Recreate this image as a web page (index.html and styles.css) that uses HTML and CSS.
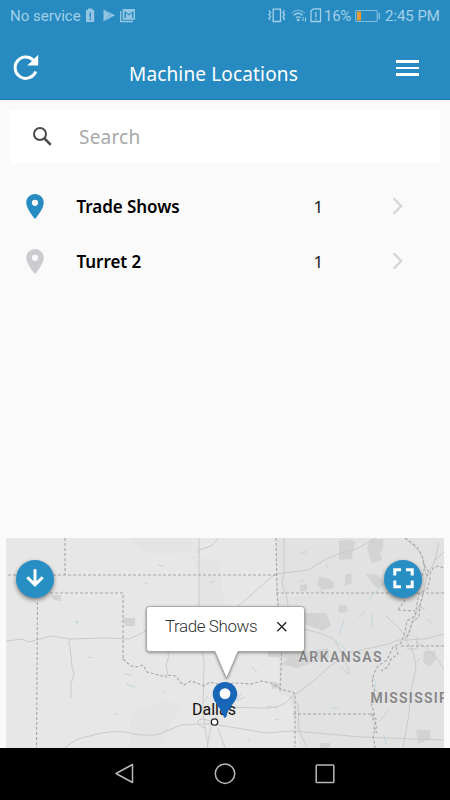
FILE: index.html
```html
<!DOCTYPE html>
<html lang="en">
<head>
<meta charset="utf-8">
<title>Machine Locations</title>
<link rel="stylesheet" href="styles.css">
</head>
<body>
<div class="screen">
  <header class="header">
    <div class="status">
      <span class="carrier">No service</span>
      <svg class="status-left" width="52" height="16" viewBox="85 8 52 16" fill="#94c6e3">
        <path fill-rule="evenodd" d="M88 8.500h4.500V10h1.700v12H86V10h2zM89.500 12.500v5h1.500v-5zM89.500 18.500V20h1.500v-1.500z"/>
        <path d="M103.500 9.500l11.500 5.700-11.500 6.300z"/><path d="M104 9.500l8 8M104 21l8-8" fill="none" stroke="#5ba5cf" stroke-width=".7"/>
        <path fill-rule="evenodd" d="M122.700 9h12.300v10.800h-12.300zM124.500 11v7h1.500v-5l3 2.500 3-2.500v5h1.500v-7l-4.500 3z"/>
        <path d="M120.700 11v10.500H133" fill="none" stroke="#94c6e3" stroke-width="1.300"/>
      </svg>
      <svg class="status-right" width="55" height="16" viewBox="267 8 55 16" fill="none" stroke="#a4d0e8" stroke-width="1.300">
        <path d="M273.200 9.200h7.300v12.300h-7.300zM269 10.500l1.500 2-1.500 2 1.500 2-1.500 2 1 1.500M284.500 10.500l-1.500 2 1.500 2-1.500 2 1.500 2-1 1.500"/>
        <path d="M291.500 13q6.500-5.500 13.500 0" stroke="#6cb0d7"/><path d="M293.700 15.300q4.500-4 9 0M295.800 17.800q2.500-2 4.800 0"/><circle cx="298.200" cy="20" r=".7"/><path d="M303 17v4M305.500 17.500v4" stroke-width="1"/>
        <path d="M311 11l2.500-2.200h7v12.700H311zM315.800 12v5M315.800 18.300v1.500"/>
      </svg>
      <span class="percent">16%</span>
      <svg class="battery" width="26" height="14" viewBox="355 8 26 14">
        <rect x="355.700" y="9.500" width="21.500" height="11" rx="1" fill="none" stroke="#80bde0" stroke-width="1.100"/>
        <path fill="#e89b35" d="M357 10.500h4v9h-4z"/><path fill="#94c6e3" d="M378.500 12h1.300v6h-1.300z"/>
      </svg>
      <span class="clock">2:45 PM</span>
    </div>
    <div class="appbar">
      <svg class="refresh" width="28" height="28" viewBox="12 54 28 28"><path d="M35.800 71.500A10.700 10.700 0 1 1 33.300 60" fill="none" stroke="#fff" stroke-width="3"/><path fill="#fff" d="M38.200 54.800v10.800h-10.900z"/></svg>
      <h1 class="title">Machine Locations</h1>
      <div class="menu"><i></i><i></i><i></i></div>
    </div>
  </header>
  <div class="search">
    <svg width="20" height="20" viewBox="32 126 20 20" fill="none" stroke="#4b4b4b"><circle cx="40" cy="133" r="6" stroke-width="2"/><path d="M44.500 137.500l6.300 6.300" stroke-width="2.500"/></svg>
    <span>Search</span>
  </div>
  <main class="list">
    <div class="row">
      <svg class="pin" viewBox="5 2 14 20"><path fill="#258bc1" fill-rule="evenodd" d="M12 2C8.100 2 5 5.100 5 9c0 5.250 7 13 7 13s7-7.750 7-13c0-3.900-3.100-7-7-7zm0 9.500a2.500 2.500 0 1 1 0-5 2.500 2.500 0 0 1 0 5z"/></svg>
      <span class="name">Trade Shows</span><span class="count">1</span>
      <svg class="chevron" viewBox="0 0 12 18"><path d="M1.500 1.200L9.200 9l-7.700 7.800" fill="none" stroke="#d4d4d4" stroke-width="2.200"/></svg>
    </div>
    <div class="row">
      <svg class="pin" viewBox="5 2 14 20"><path fill="#cbcbd0" fill-rule="evenodd" d="M12 2C8.100 2 5 5.100 5 9c0 5.250 7 13 7 13s7-7.750 7-13c0-3.900-3.100-7-7-7zm0 9.500a2.500 2.500 0 1 1 0-5 2.500 2.500 0 0 1 0 5z"/></svg>
      <span class="name">Turret 2</span><span class="count">1</span>
      <svg class="chevron" viewBox="0 0 12 18"><path d="M1.500 1.200L9.200 9l-7.700 7.800" fill="none" stroke="#d4d4d4" stroke-width="2.200"/></svg>
    </div>
  </main>
  <section class="map">
    <svg class="canvas" viewBox="6 538 438 210">
      <path class="terrain" d="M276 538h168v55H276zM276 596l70-3 98 0v155H300l-10-50-10-5z"/>
      <path class="terrain faint" d="M130 538h62v12q-28 8-52 1zM190 555q18 25 5 55l30 2-5-50zM130 715q30-20 50-10l-20 43h-30z"/>
      <g class="park">
        <path d="M339 541l11-2 6 3-3 8-1 9-13 1zM371 539h12v10l-3 4 2 7-10 3-3-8-2-8zM319 577l8 1 7 4v6l-12 2-5-5zM345 575l6-2 1 10-7 3zM366 574l12 1 8 10-9 3-5-5zM300 585l7-1v7h-7zM305 613h21l5 12-8 6-18-7zM338 606l8-1 2 7-9 1zM268 650l19-2 17 4 24-4 1 9-32 11-16-4 7-6-20-1zM424 651h11l1 8-6 8-7-5zM416 730h14l1 9-13 5zM123 618h12v8h-10zM50 595h11v6l-7-1zM271 682l8 1 1 5-8 1zM320 743h10v5h-10z"/>
      </g>
      <g class="road">
        <path d="M6 641l17-2 5 3 9-2 14-4 19 3 36-1 23 1 9-4 9-5 12-1"/>
        <path d="M71 639q-4 3-1 8l2 20 2 7-3 10v14M199 538v70M199 640l5 20-1 53 5 35M168 675l-2-10q4-8 2-14l8-5M197 553l2-3 12-4 8-8M65 748q10-10 25-12 20-6 36-4 12 4 30 3l25-10 18-1h12l20 3 35 6 25-2 25 2 45 4 83 3"/>
        <path d="M210 721q-10-4-12 0t7 7M211 726l-4 22M218 728l7 20M212 715l12-8 34 1q25 2 33-11 20-12 40-32l12-6M236 608l39-34 33-4 20-12 13-5 15-4 20-11M284 538v35l-2 10 4 12 3 15v23M304 629l18 5 12 5 8 15 8 20M348 653l40-9 10-4h8l19-1 19-5M386 616l14 13 6 9 5-12 11-26 5-25 7-12 5-20M405 538l12 11 6 10 3 16M406 640l8 14 2 15-6 25-1 20-6 34M416 642q20 10 28 28M291 697l7 8 1 25 8 18M417 606l8 3M435 560l9-8"/>
        <path d="M417 637v12h-10"/>
      </g>
      <g class="water">
        <path d="M145 583l3 1M75 622l3-1-2 3M158 565l6 1M210 583l5-2M88 657l4 1M124 673l8 3M165 645l6 3M300 554l5-3 1 4M326 564l2 5M299 582l5-2M319 590l6 4M368 600l8-8 5-6M344 620l-5 15M359 618l6-7M372 613v15M336 641l10 9M340 667l9 7M370 675l6 7-1 7 5 5M267 706l10 2M275 720l4-1M331 708h8M388 710l-9 12M384 735l2 9M248 738l3 4M409 640l-3-3M415 664l5-6M429 691l1 8M245 697l-8 4 4-8M252 667l5 5M208 695l-3 6M126 684l9 3M164 694l-1-3M115 714h3M427 619l5 4M321 650l-7 8M405 590l3-5"/>
      </g>
      <g class="border">
        <path d="M65 538v37M8 575h268M50 593h73v66M37.500 602l-1 146"/>
        <path d="M123 659l8 7 6 1 6-2 4 7 11 3 8 2v-2l10 1 4 6 4 3 7-4 6 2 7 3 6-4 7 2 19-1 16 1 9-3 10 2 12 7 10 2 2 2v53"/>
        <path d="M276 538l1 55 5 50-2 50M276 593h168M293 714h82M401 646h43"/>
        <path d="M405 538l12 9 5 8 2 10 6 9 3-6 5-2 6 2M426 574l4 4-2 10-9 6-2 10-2 12-8 5-2 11-4 11-8 4-6 13-9 6-4 7-2 10 3 9-4 11 3 9-1 7 4 7-4 9 2 13M398 610l7-10M398 610l17 1"/>
        <path d="M422 576l3-9-2-5M423 594l-3 11-1 12-7 5-3 12-4 5M396 647l2 7-7 5-3 8-7 4M371 714l5 5-2 9 3 5"/>
      </g>
      <text class="region" x="298.500" y="661.500" textLength="83">ARKANSAS</text>
      <text class="region" x="370.500" y="702.800" textLength="93">MISSISSIPPI</text>
      <text class="city" x="192" y="714.500" textLength="44">Dallas</text>
      <circle cx="214.500" cy="722" r="3.200" fill="#fff" stroke="#222" stroke-width="1.300"/>
      <path fill="#1766b8" d="M225 682c-6.800 0-12.300 5.500-12.300 12 0 8 7.800 12.500 11 22.800q1.200 2 2.600 0C228 706.500 237.300 702 237.300 694c0-6.500-5.500-12-12.300-12z"/><circle cx="225" cy="693.600" r="5.400" fill="#fff"/>
      <path class="bubble" d="M149.500 606.500h152q3 0 3 3v39q0 3-3 3h-63.500L226.500 678.500 215 651.500h-65.500q-3 0-3-3v-39q0-3 3-3z"/>
      <text class="bubble-text" x="165" y="632" textLength="92.500">Trade Shows</text>
      <path d="M277.300 622.300l9 9m0-9l-9 9" stroke="#222" stroke-width="1.300"/>
    </svg>
    <button class="fab left" aria-label="Down"><svg viewBox="0 0 38 38"><path d="M19 9.300v15.500M11.300 17.200L19 24.900l7.700-7.700" fill="none" stroke="#fff" stroke-width="3"/></svg></button>
    <button class="fab right" aria-label="Full screen"><svg viewBox="0 0 38 38"><path d="M10.800 15.500V9.800H17M22 9.800h6.200v5.700M28.200 20.500v6.200H22M17 26.700h-6.200v-6.200" fill="none" stroke="#fff" stroke-width="3"/></svg></button>
  </section>
  <nav class="nav">
    <svg viewBox="0 0 24 24"><path d="M19.500 2.500v18L3 11.500z"/></svg>
    <svg viewBox="0 0 24 24"><circle cx="12" cy="11.700" r="9.700"/></svg>
    <svg viewBox="0 0 24 24"><rect x="3.200" y="2.900" width="17.600" height="17.600" rx=".8"/></svg>
  </nav>
</div>
</body>
</html>
```
FILE: styles.css
```css
* { box-sizing: border-box; }
body { margin: 0; background: #fafafa; font-family: "Noto Sans", sans-serif; }
.screen { width: 450px; height: 800px; display: flex; flex-direction: column; overflow: hidden; }
svg { display: block; flex: none; }
.header { height: 100px; background: #278bc1; border-bottom: 1px solid #187bb0; }
.status { height: 32px; display: flex; align-items: center; padding: 0 0 0 10px; font: 15px/32px Roboto, sans-serif; color: #a3cfe7; white-space: nowrap; }
.status span { flex: none; }
.carrier { width: 75px; }
.status-right { margin-left: 130px; }
.percent { width: 31px; margin-left: 2px; letter-spacing: -.3px; }
.clock { margin-left: 4px; letter-spacing: -.05px; }
.appbar { height: 68px; display: flex; align-items: flex-start; padding: 22px 31px 0 12px; }
.title { margin: 6px 0 0 89px; width: 267px; font: 400 19px/28px "Noto Sans", sans-serif; color: #fff; letter-spacing: .15px; white-space: nowrap; }
.menu { width: 23px; margin-top: 6px; display: grid; gap: 4px; }
.menu i { height: 2.500px; background: #fff; }
.search { height: 53px; margin: 10px 10px 0; padding-left: 22px; background: #fff; display: flex; align-items: center; gap: 27px; color: #a8a8a8; font-size: 19px; letter-spacing: .2px; }
.list { height: 375px; padding-top: 15.500px; flex: none; }
.row { height: 55px; display: flex; align-items: center; padding-left: 26px; }
.pin { width: 18px; height: 25px; }
.name { width: 237px; margin-left: 32.500px; font-size: 17px; font-weight: 600; letter-spacing: -.05px; color: #000; }
.count { width: 78.500px; font-size: 17px; color: #222; }
.chevron { width: 12px; height: 18px; }
.map { position: relative; width: 438px; height: 210px; margin: 0 6px; flex: none; background: #e7e7e7; overflow: hidden; }
.canvas { width: 438px; height: 210px; }
.terrain { fill: #e2e2e2; }
.terrain.faint { fill: #e4e4e4; }
.park { fill: #d3d3d3; }
.road { fill: none; stroke: #cacaca; stroke-width: 1; }
.water { fill: none; stroke: #bfd5dc; stroke-width: 1; }
.border { fill: none; stroke: #a6a6a6; stroke-width: 1.100; stroke-dasharray: 3 2; }
.region { font: 600 14px Roboto, sans-serif; fill: #858585; stroke: #e9e9e9; stroke-width: 1px; paint-order: stroke; }
.city { font: 400 16px Roboto, sans-serif; fill: #111; }
.bubble { fill: #fff; stroke: #999; stroke-width: .8; filter: drop-shadow(0 1px 1.500px #0006); }
.bubble-text { font: 300 17px Roboto, sans-serif; fill: #333; }
.fab { position: absolute; top: 22px; width: 38px; height: 38px; padding: 0; border: 0; border-radius: 50%; background: #278fc4; box-shadow: 0 2px 4px #0007; }
.fab.left { left: 10px; }
.fab.right { right: 22px; }
.nav { height: 52px; flex: none; background: #000; display: flex; justify-content: center; align-items: center; gap: 76px; }
.nav svg { width: 24px; height: 24px; fill: none; stroke: #b8b8b8; stroke-width: 1.500; stroke-linejoin: round; }
```
